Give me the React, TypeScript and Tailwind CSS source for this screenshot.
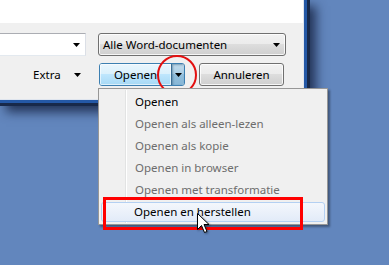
const font = { fontFamily: '"Noto Sans", "Open Sans", sans-serif' };

function Arrow() {
  return (
    <svg width="7" height="4" viewBox="0 0 7 4" className="block">
      <path d="M0 0H7L3.5 4Z" fill="#000" />
    </svg>
  );
}

function Cursor() {
  return (
    <svg width="14" height="22" viewBox="0 0 14 22" className="block">
      <path
        d="M0.5 0.5V16.5L4.5 12.5L7.5 19.5L10 18.5L7 11.5H12Z"
        fill="#fff"
        stroke="#000"
        strokeWidth="1"
        strokeLinejoin="miter"
      />
    </svg>
  );
}

const items = [
  { label: 'Openen', enabled: true },
  { label: 'Openen als alleen-lezen', enabled: false },
  { label: 'Openen als kopie', enabled: false },
  { label: 'Openen in browser', enabled: false },
  { label: 'Openen met transformatie', enabled: false },
  { label: 'Openen en herstellen', enabled: true, hover: true },
];

export default function App() {
  return (
    <div
      className="relative w-[389px] h-[265px] overflow-hidden bg-[#6286bd] text-[11.5px] text-black"
      style={font}
    >
      {/* dialog window */}
      <div className="w-[310px] h-[106px] bg-[#2458a6] border-r-[3px] border-b-[3px] border-[#18294a] shadow-[6px_6px_10px_rgba(15,25,55,0.75)]">
        <div className="w-[304px] h-[100px] flex flex-col bg-[#f0f0f0] border-r border-b border-[#dfe5ee]">
          <div className="h-[23px] bg-white" />

          {/* row 1 */}
          <div className="flex items-center mt-[10px] h-[23px]">
            <div className="w-[86px] h-[23px] bg-white border border-l-0 border-t-[#abadb3] border-r-[#dbdfe6] border-b-[#e3e9ef] flex items-center justify-end pr-[5px]">
              <Arrow />
            </div>
            <div className="ml-[12px] w-[188px] h-[23px] rounded-[3px] border border-[#707070] bg-[linear-gradient(#f2f2f2,#ebebeb_50%,#dddddd_50%,#cfcfcf)] shadow-[inset_0_0_0_1px_rgba(255,255,255,0.8)] flex items-center justify-between pl-[4px] pr-[5px]">
              <span>Alle Word-documenten</span>
              <Arrow />
            </div>
          </div>

          {/* row 2 */}
          <div className="flex items-center mt-[7px] h-[23px]">
            <div className="w-[86px] flex items-center pl-[33px]">
              <span>Extra</span>
              <span className="ml-auto mr-[5px]">
                <Arrow />
              </span>
            </div>
            <div className="ml-[13px] w-[86px] h-[23px] rounded-[3px] border border-[#3c7fb1] flex overflow-hidden">
              <div className="w-[71px] h-full bg-[linear-gradient(#eaf6fd,#d9f0fc_50%,#bee6fd_50%,#a7d9f5)] shadow-[inset_0_0_0_1px_rgba(255,255,255,0.6)] flex items-center justify-center">
                Openen
              </div>
              <div className="w-px h-full bg-[#3c6e94]" />
              <div className="flex-1 h-full bg-[linear-gradient(#c2dcec,#aacde4_50%,#93bfdc_50%,#86b6d6)] shadow-[inset_1px_1px_2px_rgba(40,80,110,0.45)] flex items-center justify-center">
                <Arrow />
              </div>
            </div>
            <div className="ml-[14px] w-[85px] h-[23px] rounded-[3px] border border-[#707070] bg-[linear-gradient(#f2f2f2,#ebebeb_50%,#dddddd_50%,#cfcfcf)] shadow-[inset_0_0_0_1px_rgba(255,255,255,0.8)] flex items-center justify-center">
              Annuleren
            </div>
          </div>
        </div>
      </div>

      {/* red circle annotation */}
      <div className="absolute left-[157px] top-[55px] w-[40px] h-[40px] rounded-full border-[2.5px] border-[#e31010]" />

      {/* dropdown menu */}
      <div className="absolute left-[98px] top-[88px] w-[230px] bg-[#f0f0f0] border border-[#979797] shadow-[2px_2px_2px_rgba(0,0,0,0.35)] pt-[2px] pb-[1px]">
        <div className="absolute left-[26px] top-[1px] bottom-[1px] w-px bg-[#e2e3e3]" />
        <div className="absolute left-[27px] top-[1px] bottom-[1px] w-px bg-white" />
        {items.map((it) => (
          <div key={it.label} className="relative h-[22px] px-[2px] py-px">
            <div
              className={
                it.hover
                  ? 'h-full rounded-[3px] border border-[#b4d0f2] bg-[linear-gradient(#f4f7fc,#e2ebf8)] flex items-center pl-[32px]'
                  : 'h-full flex items-center pl-[33px] border border-transparent'
              }
            >
              <span className={it.enabled ? 'text-black' : 'text-[#6d6d6d]'}>{it.label}</span>
            </div>
          </div>
        ))}
      </div>

      {/* red rectangle annotation */}
      <div className="absolute left-[103px] top-[197px] w-[200px] h-[33px] border-[3px] border-[#ff0000]" />

      {/* mouse cursor */}
      <div className="absolute left-[197px] top-[213px] drop-shadow-[1px_1px_1px_rgba(0,0,0,0.4)]">
        <Cursor />
      </div>
    </div>
  );
}
